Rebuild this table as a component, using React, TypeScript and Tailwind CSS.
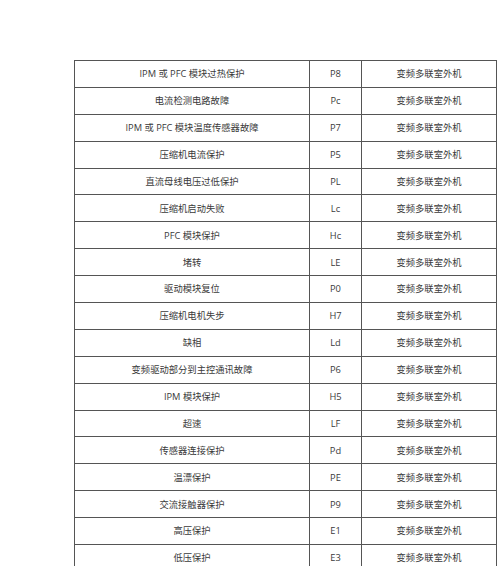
const rows: [string, string][] = [
  ["IPM 或 PFC 模块过热保护", "P8"],
  ["电流检测电路故障", "Pc"],
  ["IPM 或 PFC 模块温度传感器故障", "P7"],
  ["压缩机电流保护", "P5"],
  ["直流母线电压过低保护", "PL"],
  ["压缩机启动失败", "Lc"],
  ["PFC 模块保护", "Hc"],
  ["堵转", "LE"],
  ["驱动模块复位", "P0"],
  ["压缩机电机失步", "H7"],
  ["缺相", "Ld"],
  ["变频驱动部分到主控通讯故障", "P6"],
  ["IPM 模块保护", "H5"],
  ["超速", "LF"],
  ["传感器连接保护", "Pd"],
  ["温漂保护", "PE"],
  ["交流接触器保护", "P9"],
  ["高压保护", "E1"],
  ["低压保护", "E3"],
];

export default function App() {
  return (
    <div
      className="w-[500px] h-[566px] overflow-hidden bg-white pt-[60px] pl-[74px]"
      style={{ fontFamily: '"Open Sans", "Noto Sans CJK SC", sans-serif' }}
    >
      <table className="border-collapse text-[9.3px] text-[#3a3a3a] w-[422px] table-fixed">
        <colgroup>
          <col className="w-[235px]" />
          <col className="w-[52px]" />
          <col className="w-[135px]" />
        </colgroup>
        <tbody>
          {rows.map(([name, code]) => (
            <tr key={code} className="h-[26.9px]">
              <td className="border-[1.5px] border-[#555] text-center p-0 leading-none">{name}</td>
              <td className="border-[1.5px] border-[#555] text-center p-0 leading-none">{code}</td>
              <td className="border-[1.5px] border-[#555] text-center p-0 leading-none">变频多联室外机</td>
            </tr>
          ))}
        </tbody>
      </table>
    </div>
  );
}
